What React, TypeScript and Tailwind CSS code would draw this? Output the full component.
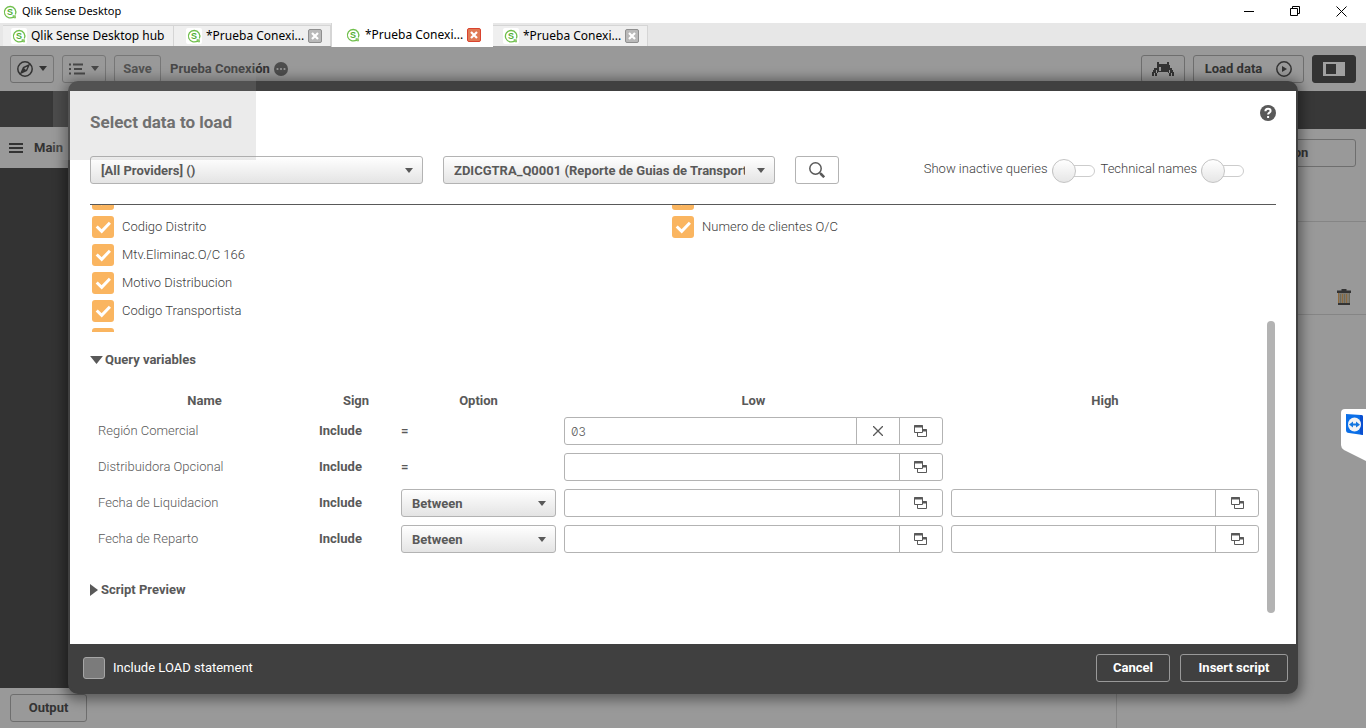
import type { FC, ReactNode } from 'react';

type Variable = {
  name: string;
  range: boolean;
  low: string;
};

// empty names are the rows scrolled past the edge of the list
const dimensions = [
  '',
  'Codigo Distrito',
  'Mtv.Eliminac.O/C 166',
  'Motivo Distribucion',
  'Codigo Transportista',
  '',
];

const measures = ['', 'Numero de clientes O/C'];

const variables: Variable[] = [
  { name: 'Región Comercial', range: false, low: '03' },
  { name: 'Distribuidora Opcional', range: false, low: '' },
  { name: 'Fecha de Liquidacion', range: true, low: '' },
  { name: 'Fecha de Reparto', range: true, low: '' },
];

const QlikLogo: FC = () => (
  <svg viewBox="0 0 16 16" className="size-4 shrink-0" aria-hidden="true">
    <rect width="16" height="16" rx="2" fill="#fff" />
    <path
      d="M12.2 12.2A5.7 5.7 0 1 1 13.3 10.6M11 11.6l1.2 1.9h1.7"
      fill="none"
      stroke="#6fbf4b"
      strokeWidth="1.3"
    />
    <path d="M10.5 11.2h3.3v2.8h-1.6z" fill="#8bcb6d" />
    <text
      x="8"
      y="11"
      textAnchor="middle"
      fontFamily="Liberation Sans"
      fontWeight="700"
      fontSize="9"
      fill="#4fae32"
    >
      S
    </text>
  </svg>
);

const Caret: FC<{ className?: string }> = ({ className }) => (
  <svg viewBox="0 0 8 5" className={className ?? 'h-[5px] w-2'} fill="currentColor" aria-hidden="true">
    <path d="M0 0h8L4 5z" />
  </svg>
);

const WindowsIcon: FC = () => (
  <svg viewBox="0 0 13 12" className="h-3 w-[13px]" fill="#fff" stroke="#595959" aria-hidden="true">
    <path d="M3.500 4.500h9v7h-9z" />
    <path d="M9 5.500h4" strokeWidth="2" />
    <path d="M.5 .5h8v7h-8z" />
    <path d="M0 1.500h9" strokeWidth="2" />
  </svg>
);

const CloseBox: FC<{ active?: boolean }> = ({ active }) => (
  <svg viewBox="0 0 14 14" className="size-[14px]" aria-hidden="true">
    <rect
      x=".5"
      y=".5"
      width="13"
      height="13"
      rx="1.500"
      fill={active ? '#e07a55' : '#b9b9b9'}
      stroke={active ? '#d9432f' : '#8f8f8f'}
    />
    <path d="M4 4l6 6M10 4l-6 6" stroke="#fff" strokeWidth="2.200" />
  </svg>
);

const Tab: FC<{ label: string; className: string; active?: boolean; closable?: boolean }> = ({
  label,
  className,
  active,
  closable,
}) => (
  <div
    className={`flex shrink-0 items-center gap-1 border-[#d5d5d5] whitespace-nowrap ${
      active
        ? 'z-10 -mb-px h-6 border-l bg-white pl-[13px]'
        : 'h-[21px] border-t border-r bg-[#efefef]'
    } ${className}`}
  >
    <a href="#" className="flex items-center gap-1">
      <QlikLogo />
      {label}
    </a>
    {closable && (
      <button type="button" aria-label="Close tab">
        <CloseBox active={active} />
      </button>
    )}
  </div>
);

const ToolButton: FC<{ children: ReactNode; className: string; label?: string }> = ({
  children,
  className,
  label,
}) => (
  <button
    type="button"
    aria-label={label}
    className={`flex h-7 shrink-0 items-center justify-center rounded-[3px] border border-[#6e6e6e] font-bold ${className}`}
  >
    {children}
  </button>
);

const Select: FC<{ label: string; option: string; className: string }> = ({
  label,
  option,
  className,
}) => (
  <div className={`relative ${className}`}>
    <select
      aria-label={label}
      className="block h-7 w-full appearance-none rounded-[3px] border border-[#b3b3b3] bg-linear-to-b from-white to-[#e4e4e4] pt-[2px] pr-[29px] pl-[10px] font-bold"
    >
      <option>{option}</option>
    </select>
    <Caret className="pointer-events-none absolute top-[12px] right-[10px] h-[5px] w-2" />
  </div>
);

const Toggle: FC<{ label: string }> = ({ label }) => (
  <label className="flex items-center gap-1">
    <span className="pb-1">{label}</span>
    <input
      type="checkbox"
      role="switch"
      className="relative h-3 w-[43px] appearance-none rounded-full border border-[#ccc] bg-white before:absolute before:-top-[7px] before:-left-px before:size-6 before:rounded-full before:border before:border-[#c4c4c4] before:bg-linear-to-b before:from-white before:to-[#e6e6e6]"
    />
  </label>
);

const Field: FC<{ name: string }> = ({ name }) => (
  <label className="flex h-7 items-start gap-2">
    <span className="relative size-[22px]">
      <input
        type="checkbox"
        defaultChecked
        className="block size-[22px] appearance-none rounded-[3px] bg-[#fab560]"
      />
      <svg
        viewBox="0 0 22 22"
        className="pointer-events-none absolute inset-0"
        fill="none"
        stroke="#fff"
        strokeWidth="3"
        aria-hidden="true"
      >
        <path d="M4.700 10.500l5 4.800 8.200-8.600" />
      </svg>
    </span>
    <span className="leading-[22px]">{name}</span>
  </label>
);

const ValueInput: FC<{ label: string; value?: string }> = ({ label, value }) => (
  <div className="flex h-7 rounded-[3px] border border-[#b3b3b3] bg-white">
    <input
      type="text"
      aria-label={label}
      defaultValue={value}
      className="min-w-0 flex-1 px-[6px] pt-px font-[Inter,sans-serif] text-xs slashed-zero outline-none"
    />
    {value && (
      <button
        type="button"
        aria-label="Clear"
        className="flex w-[43px] items-center justify-center border-l border-[#b3b3b3]"
      >
        <svg viewBox="0 0 10 10" className="size-[10px]" stroke="#595959" strokeWidth="1.300" aria-hidden="true">
          <path d="M0 0l10 10M10 0L0 10" />
        </svg>
      </button>
    )}
    <button
      type="button"
      aria-label="Select value"
      className="flex w-[43px] items-center justify-center border-l border-[#b3b3b3]"
    >
      <WindowsIcon />
    </button>
  </div>
);

const WindowFrame: FC = () => (
  <>
    <header className="flex h-[23px] shrink-0 items-center gap-1 bg-white pl-[2px] text-[11px] text-black">
      <QlikLogo />
      <h1>Qlik Sense Desktop</h1>
      <div className="ml-auto flex gap-[35px] pr-[19px]">
        <button type="button" aria-label="Minimize">
          <svg viewBox="0 0 11 11" className="size-[11px]" stroke="#000" aria-hidden="true">
            <path d="M0 5.500h10" />
          </svg>
        </button>
        <button type="button" aria-label="Restore">
          <svg viewBox="0 0 11 11" className="size-[11px]" fill="none" stroke="#000" aria-hidden="true">
            <path d="M.5 2.500h7v7h-7zM2.500 2.500v-2h7v7h-2" />
          </svg>
        </button>
        <button type="button" aria-label="Close">
          <svg viewBox="0 0 11 11" className="size-[11px]" stroke="#000" aria-hidden="true">
            <path d="M.5 .5l10 10M10.500 .5l-10 10" />
          </svg>
        </button>
      </div>
    </header>
    <nav className="flex h-[23px] shrink-0 items-end bg-[#e7e7e7] pl-[3px] text-xs text-black">
      <Tab label="Qlik Sense Desktop hub" className="w-[171px] pl-2" />
      <Tab label="*Prueba Conexi..." className="w-[157px] pl-3" closable />
      <Tab label="*Prueba Conexi..." className="w-[162px]" closable active />
      <Tab label="*Prueba Conexi..." className="w-[155px] pl-[10px]" closable />
    </nav>
  </>
);

const Toolbar: FC = () => (
  <div className="flex h-[45px] shrink-0 items-center gap-2 bg-[#999] px-[10px]">
    <ToolButton label="Navigation" className="w-11 gap-[6px]">
      <svg viewBox="0 0 16 16" className="size-4" fill="none" stroke="currentColor" aria-hidden="true">
        <circle cx="8" cy="8" r="7.200" strokeWidth="1.500" />
        <path d="M12 4L9.500 9.500 4 12l2.500-5.500z" strokeWidth="1.400" />
        <path d="M6.500 6.500L9.500 9.500 4 12z" fill="currentColor" stroke="none" />
      </svg>
      <Caret />
    </ToolButton>
    <ToolButton label="Menu" className="w-11 gap-[6px]">
      <svg viewBox="0 0 16 12" className="h-3 w-4" stroke="currentColor" strokeWidth="1.800" aria-hidden="true">
        <path d="M0 1.500h2M4 1.500h10M0 6h2M5 6h8M0 10.500h2M5 10.500h11" />
      </svg>
      <Caret />
    </ToolButton>
    <ToolButton className="w-[47px] text-[#404040]">Save</ToolButton>
    <div className="flex items-center gap-1 pl-px font-bold">
      Prueba Conexión
      <svg viewBox="0 0 14 14" className="size-[14px]" aria-hidden="true">
        <circle cx="7" cy="7" r="7" fill="#4d4d4d" />
        <g fill="#999">
          <circle cx="3.500" cy="7" r="1.100" />
          <circle cx="7" cy="7" r="1.100" />
          <circle cx="10.500" cy="7" r="1.100" />
        </g>
      </svg>
    </div>
    <ToolButton label="Debug" className="ml-auto w-11">
      <svg viewBox="0 0 22 14" className="h-[14px] w-[22px]" fill="currentColor" aria-hidden="true">
        <path d="M5 0h2v2h8V0h2v3h1v3h2v2h1v2h1v4h-2v-3h-1v3h-2v-3h-1v-1H6v1H5v3H3v-3H2v3H0v-4h1V8h1V6h3V3z" />
        <path d="M7 5h2v4H7z" fill="#999" />
        <path d="M4 8h1v3H4zM17 8h1v3h-1z" fill="#999" />
      </svg>
    </ToolButton>
    <ToolButton className="w-[111px] gap-[14px]">
      Load data
      <svg viewBox="0 0 16 16" className="size-4" aria-hidden="true">
        <circle cx="8" cy="8" r="7.200" fill="none" stroke="currentColor" strokeWidth="1.500" />
        <path d="M6 5l5 3-5 3z" fill="currentColor" />
      </svg>
    </ToolButton>
    <ToolButton label="Toggle panel" className="w-11 border-[#333] bg-[#333]">
      <svg viewBox="0 0 22 14" className="h-[14px] w-[22px]" aria-hidden="true">
        <path d="M0 0h22v14H0z" fill="#a0a0a0" />
        <path d="M3 2h10v10H3z" fill="#333" />
      </svg>
    </ToolButton>
  </div>
);

const Editor: FC = () => (
  <div className="flex min-h-0 flex-1 bg-[#383838]">
    <div className="flex flex-1 flex-col">
      <div className="mt-9 flex h-[41px] shrink-0 items-center gap-[11px] bg-[#999] pl-[9px] font-bold">
        <svg viewBox="0 0 14 10" className="h-[10px] w-[14px]" stroke="#333" strokeWidth="2" aria-hidden="true">
          <path d="M0 1h14M0 5h14M0 9h14" />
        </svg>
        Main
      </div>
      <div className="flex-1 bg-[#333]" />
      <div className="flex h-10 shrink-0 items-center bg-[#999] px-[10px]">
        <ToolButton className="w-[77px]">Output</ToolButton>
      </div>
    </div>
    <aside className="mt-[38px] w-[250px] border-l border-[#858585] bg-[#999]">
      <div className="h-[93px] border-b border-[#858585] p-[10px]">
        <ToolButton className="w-full">Create new connection</ToolButton>
      </div>
      <div className="flex h-[93px] items-end justify-end border-b border-[#858585] px-[15px] pb-[9px]">
        <button type="button" aria-label="Delete connection">
          <svg viewBox="0 0 14 16" className="h-4 w-[14px]" aria-hidden="true">
            <path d="M1 4h12v10H1z" fill="#7f7a70" />
            <path d="M1.500 4v10.500M5.500 5v9M9.500 5v9" stroke="#8f6a3c" />
            <path d="M3.500 5v9M7.500 5v9M12.500 4v10.500" stroke="#6b6a5c" />
            <path d="M0 1.500h4.500V0h5v1.500H14V4H0zM1 14h12v2H1z" fill="#333" />
          </svg>
        </button>
      </div>
    </aside>
  </div>
);

const QueryVariables: FC = () => (
  <table className="ml-1 w-[calc(100%-4px)] table-fixed">
    <colgroup>
      <col className="w-[221px]" />
      <col className="w-[82px]" />
      <col className="w-[163px]" />
      <col className="w-[33.1%]" />
      <col />
    </colgroup>
    <thead>
      <tr className="h-6">
        <th>Name</th>
        <th>Sign</th>
        <th>Option</th>
        <th>Low</th>
        <th>High</th>
      </tr>
    </thead>
    <tbody>
      {variables.map(({ name, range, low }) => (
        <tr key={name} className="h-9">
          <td className="px-1">{name}</td>
          <td className="px-1 font-bold">Include</td>
          <td className="px-1 font-bold">
            {range ? <Select label={`${name} option`} option="Between" className="w-full" /> : '='}
          </td>
          <td className="px-1">
            <ValueInput label={`${name} low`} value={low} />
          </td>
          <td className="px-1">{range && <ValueInput label={`${name} high`} />}</td>
        </tr>
      ))}
    </tbody>
  </table>
);

const LoadDialog: FC = () => (
  <section
    role="dialog"
    aria-label="Select data to load"
    className="flex min-w-0 flex-1 flex-col rounded-[10px] border-2 border-t-[10px] border-[#404040] bg-[#404040] shadow-[0_2px_12px_4px_rgba(0,0,0,0.4)]"
  >
    <div className="flex min-h-0 flex-1 flex-col bg-white font-light text-[#404040]">
      <div className="flex h-[65px] shrink-0 items-start justify-between px-5">
        <h2 className="pt-[19px] text-[17px] leading-6 font-bold text-[#666]">Select data to load</h2>
        <button type="button" aria-label="Help" className="mt-[14px]">
          <svg viewBox="0 0 16 16" className="size-4" aria-hidden="true">
            <circle cx="8" cy="8" r="8" fill="#595959" />
            <path
              d="M5.400 6.200C5.400 4.600 6.500 3.700 8 3.700s2.600.9 2.600 2.200c0 1.800-2.500 1.700-2.500 3.700M8.100 11v2"
              fill="none"
              stroke="#fff"
              strokeWidth="2"
            />
          </svg>
        </button>
      </div>
      <div className="mx-5 flex h-[49px] shrink-0 items-start gap-5 border-b border-[#595959]">
        <Select label="Provider" option="[All Providers] ()" className="w-[333px] text-[#595959]" />
        <Select
          label="Query"
          option="ZDICGTRA_Q0001 (Reporte de Guias de Transporte)"
          className="w-[332px] text-[#595959]"
        />
        <button
          type="button"
          aria-label="Search"
          className="flex h-7 w-11 items-center justify-center rounded-[3px] border border-[#b3b3b3]"
        >
          <svg viewBox="0 0 16 16" className="size-4" fill="none" stroke="#595959" aria-hidden="true">
            <circle cx="6.500" cy="6.500" r="5.700" strokeWidth="1.500" />
            <path d="M10.500 10.500l1.500 1.500" strokeWidth="1.500" />
            <path d="M11.500 11.500l3.700 3.700" strokeWidth="2.600" />
          </svg>
        </button>
        <div className="mr-8 ml-auto flex h-[30px] items-center gap-[6px]">
          <Toggle label="Show inactive queries" />
          <Toggle label="Technical names" />
        </div>
      </div>
      <div className="relative min-h-0 flex-1 overflow-hidden pr-[33px] pl-5">
        <div className="h-[127px] overflow-hidden">
          <div className="-mt-[17px] mr-[11px] ml-[2px] grid grid-cols-2">
            <div>
              {dimensions.map((name, index) => (
                <Field key={index} name={name} />
              ))}
            </div>
            <div>
              {measures.map((name, index) => (
                <Field key={index} name={name} />
              ))}
            </div>
          </div>
        </div>
        <div className="text-[#595959]">
          <button type="button" className="mt-[18px] mb-[19px] flex h-5 items-center gap-[2px] font-bold">
            <Caret className="h-2 w-[13px]" />
            Query variables
          </button>
          <QueryVariables />
          <button type="button" className="mt-[23px] flex h-5 items-center gap-[3px] font-bold">
            <svg viewBox="0 0 8 12" className="h-3 w-2" fill="currentColor" aria-hidden="true">
              <path d="M0 0v12l8-6z" />
            </svg>
            Script Preview
          </button>
        </div>
        <div className="absolute top-[116px] right-[21px] h-[292px] w-2 rounded-full bg-[#b3b3b3]" />
      </div>
    </div>
    <footer className="flex h-12 shrink-0 items-center gap-[10px] pr-2 pl-[13px] text-white">
      <label className="mr-auto flex items-center gap-2">
        <input
          type="checkbox"
          className="size-[22px] appearance-none rounded-[3px] border border-[#a6a6a6] bg-[#7b7b7b]"
        />
        Include LOAD statement
      </label>
      <button type="button" className="h-7 w-[74px] rounded-[3px] border border-[#999] font-bold">
        Cancel
      </button>
      <button type="button" className="h-7 w-[108px] rounded-[3px] border border-[#999] font-bold">
        Insert script
      </button>
    </footer>
  </section>
);

export default function App() {
  return (
    <div className="flex h-screen flex-col overflow-hidden font-['Noto_Sans',sans-serif]">
      <WindowFrame />
      <main className="relative flex min-h-0 flex-1 flex-col font-[Roboto,sans-serif] text-[13px] leading-5 text-[#333]">
        <Toolbar />
        <Editor />
        <div className="absolute inset-0 flex overflow-hidden px-[68px] pt-[35px] pb-[34px]">
          <LoadDialog />
        </div>
        {/* drag highlight left over the top corner */}
        <div className="pointer-events-none absolute top-0 left-[53px] h-[114px] w-[203px] bg-[#999]/20" />
        <a href="#" aria-label="TeamViewer" className="absolute top-[363px] right-0">
          <svg viewBox="0 0 25 52" className="h-[52px] w-[25px]" aria-hidden="true">
            <path d="M25 0H4Q0 0 0 4v32q0 3 3 5l22 11z" fill="#fff" />
            <path d="M5 5l15 1q2 0 2 2v18L8 24q-3 0-3-3z" fill="#0b6fe8" />
            <path d="M19 6h1q2 0 2 2v18l-3-1z" fill="#0a4fd0" />
            <ellipse cx="13.500" cy="15.500" rx="6.500" ry="7" fill="#f4f4f4" />
            <path d="M8 15.500l4-3v2h3v-2l4 3.200-4 2.800v-2h-3v2z" fill="#1678e0" />
          </svg>
        </a>
      </main>
    </div>
  );
}
